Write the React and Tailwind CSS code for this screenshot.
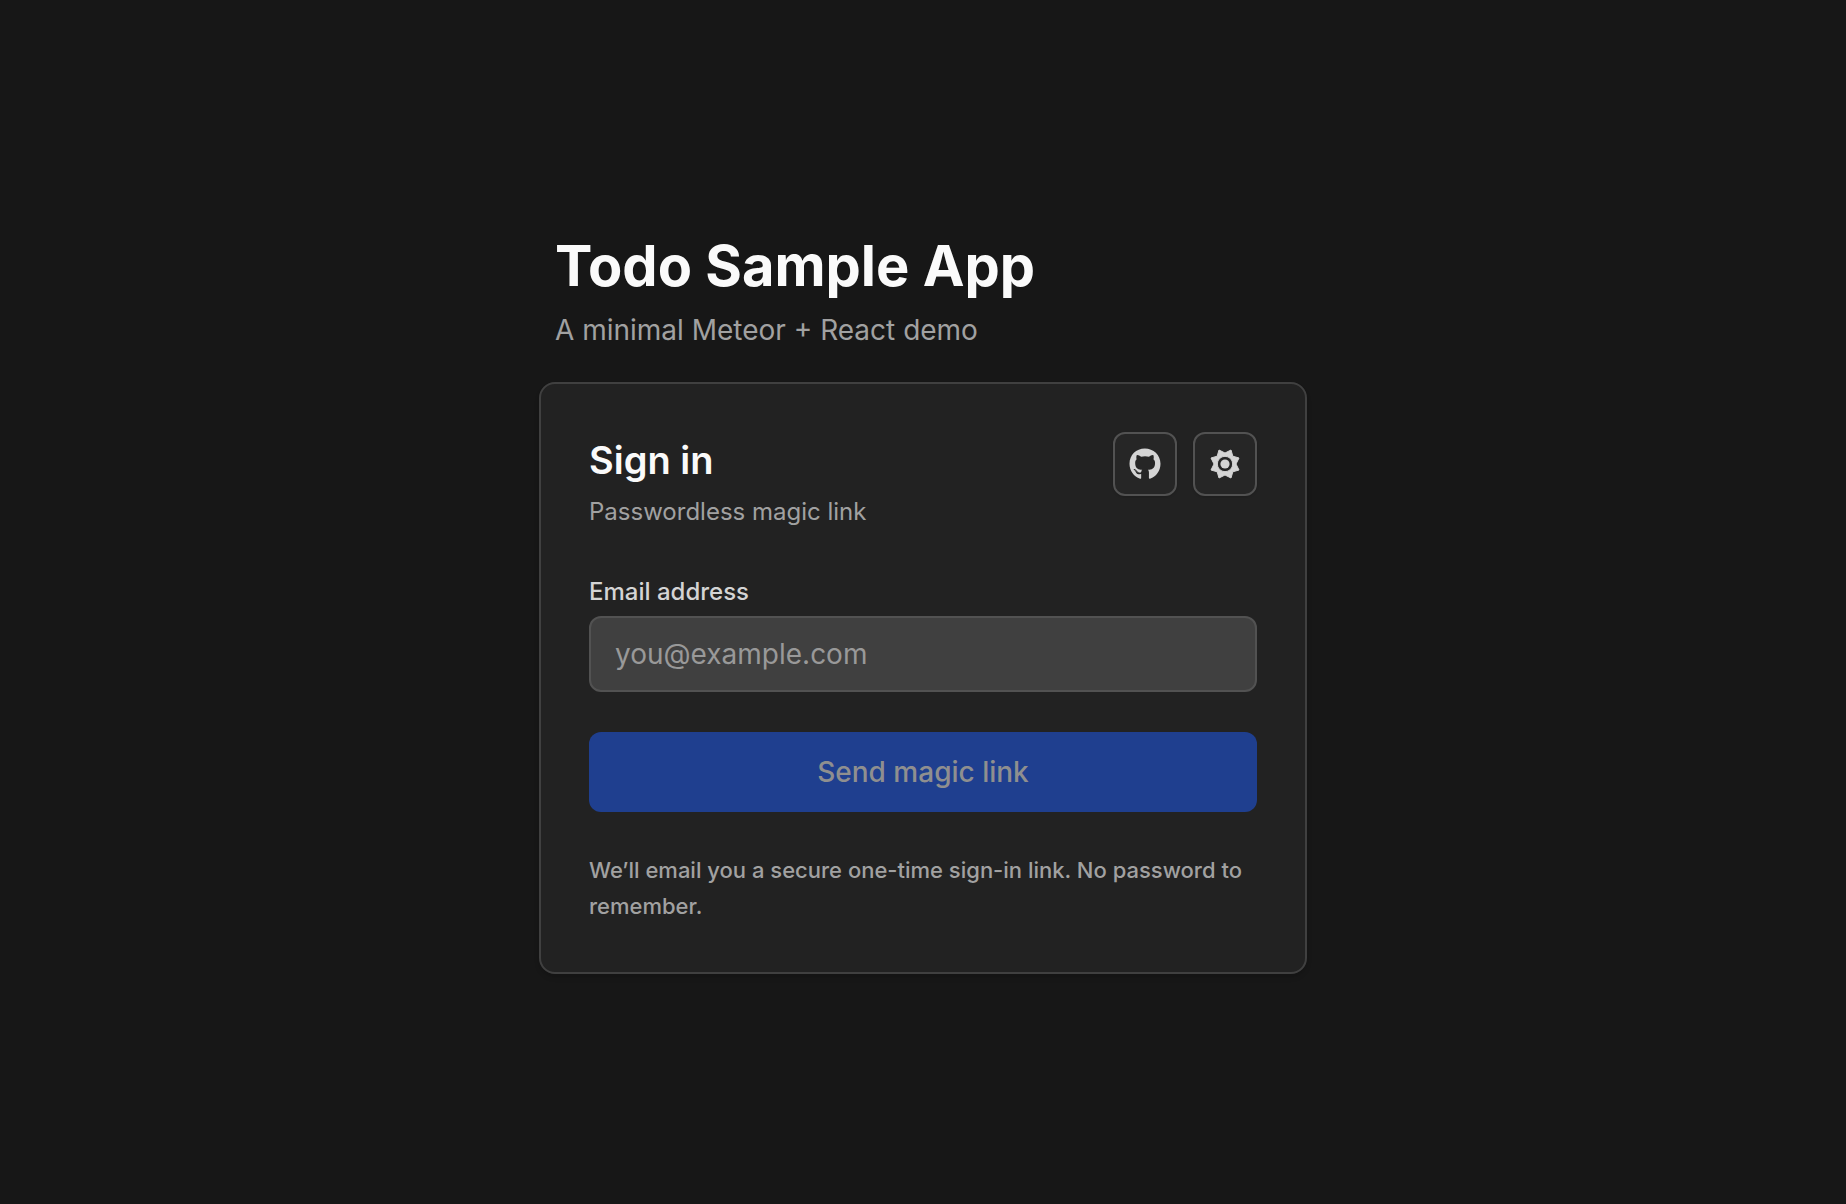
import React from "react";
import { FaGithub } from "react-icons/fa";

function SunIcon() {
  return (
    <svg viewBox="-16 -16 32 32" className="size-8" fill="currentColor" aria-hidden="true">
      <path
        fillRule="evenodd"
        stroke="currentColor"
        strokeWidth="1"
        strokeLinejoin="round"
        d="M0-11 6-14 7.8-7.8 14-6 11 0 14 6 7.8 7.8 6 14 0 11-6 14-7.8 7.8-14 6-11 0-14-6-7.8-7.8-6-14ZM0-7.7A7.7 7.7 0 1 0 0 7.7 7.7 7.7 0 1 0 0-7.7Z"
      />
      <circle r="4.6" />
    </svg>
  );
}

function IconButton({ label, children }) {
  return (
    <button
      type="button"
      aria-label={label}
      className="flex size-16 items-center justify-center rounded-xl border-2 border-neutral-600 bg-neutral-800 text-neutral-300 shadow-sm"
    >
      {children}
    </button>
  );
}

export default function App() {
  return (
    <main className="flex min-h-screen items-center justify-center bg-neutral-900 font-['Inter',sans-serif] text-neutral-50">
      <div className="w-full max-w-3xl">
        <header className="mb-8 px-4">
          <h1 className="text-[56px] leading-[72px] font-bold">Todo Sample App</h1>
          <p className="mt-2 text-[28px] leading-10 text-neutral-400">A minimal Meteor + React demo</p>
        </header>

        <section className="rounded-2xl border-2 border-neutral-700 bg-[#222222] p-12 shadow-md">
          <div className="flex items-start justify-between">
            <div>
              <h2 className="text-[38px] leading-14 font-semibold">Sign in</h2>
              <p className="mt-2 text-2xl text-neutral-400">Passwordless magic link</p>
            </div>
            <div className="flex gap-4">
              <IconButton label="View source on GitHub">
                <FaGithub className="size-8" aria-hidden="true" />
              </IconButton>
              <IconButton label="Toggle theme">
                <SunIcon />
              </IconButton>
            </div>
          </div>

          <form className="mt-12" onSubmit={(e) => e.preventDefault()}>
            <label htmlFor="email" className="block text-2xl font-medium text-neutral-300">
              Email address
            </label>
            <input
              id="email"
              type="email"
              placeholder="you@example.com"
              className="mt-2 block w-full rounded-xl border-2 border-neutral-600 bg-neutral-700 px-6 py-4 text-[28px] leading-10 outline-none placeholder:text-[#999999]"
            />
            <button
              type="submit"
              disabled
              className="mt-10 block w-full rounded-xl bg-[#1f3f8f] py-5 text-[28px] leading-10 font-medium text-[#8f8f8f]"
            >
              Send magic link
            </button>
          </form>

          <p className="mt-10 text-[22px] leading-9 font-medium text-neutral-400">
            We’ll email you a secure one-time sign-in link. No password to remember.
          </p>
        </section>
      </div>
    </main>
  );
}
